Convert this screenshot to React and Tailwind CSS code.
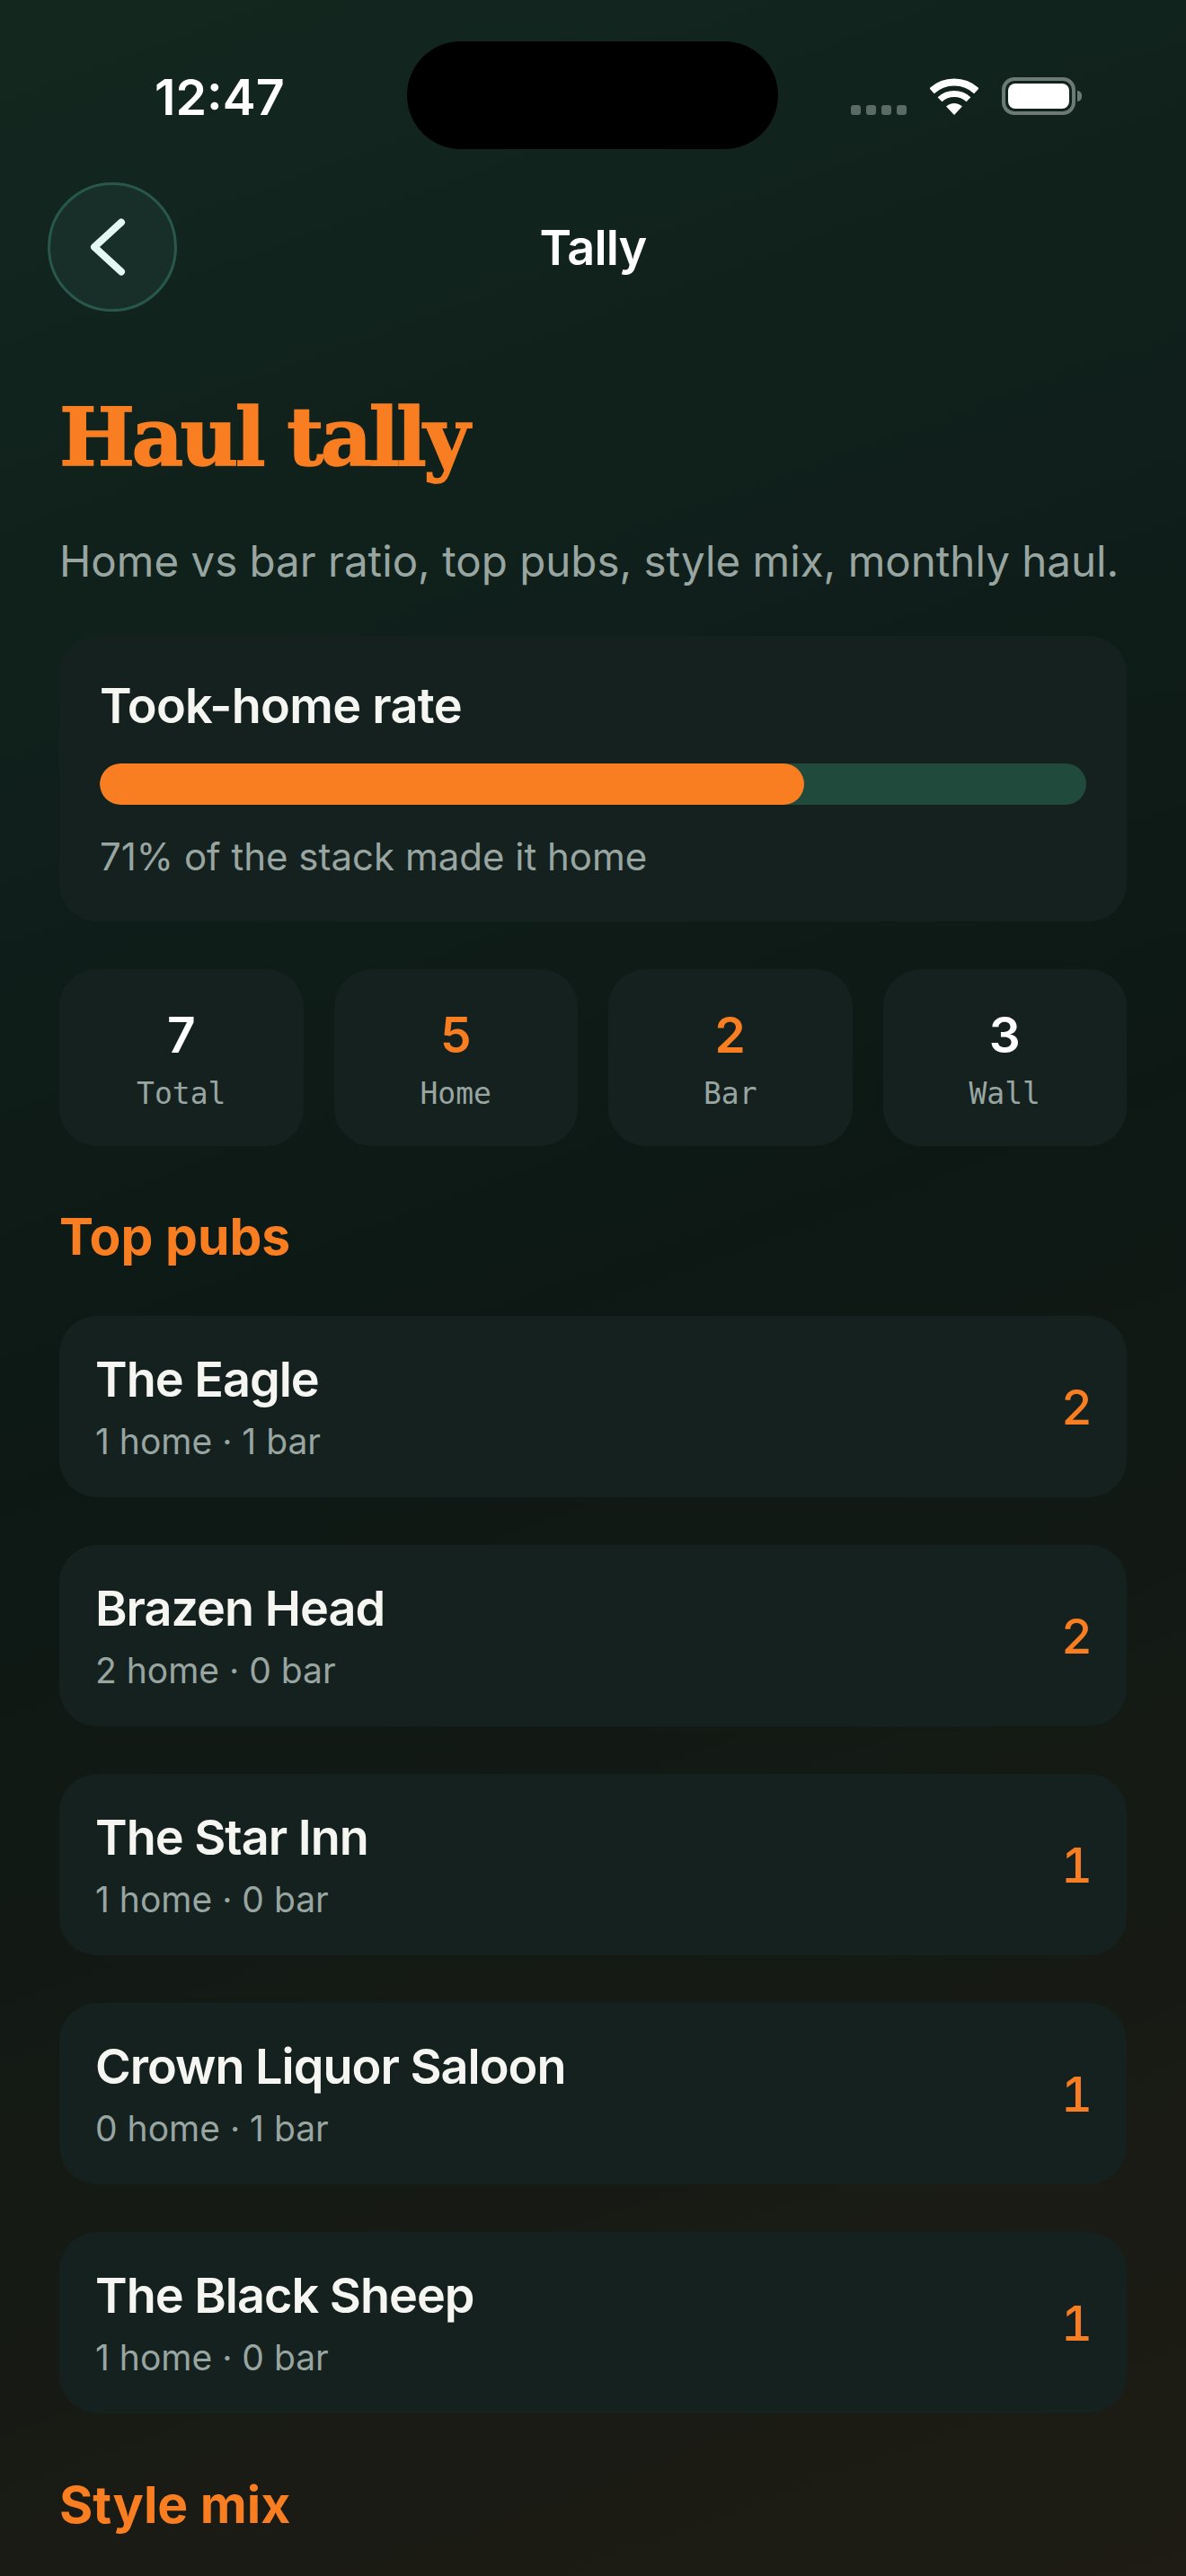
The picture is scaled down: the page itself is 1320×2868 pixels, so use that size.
const pubs = [
  { name: "The Eagle", sub: "1 home · 1 bar", count: 2 },
  { name: "Brazen Head", sub: "2 home · 0 bar", count: 2 },
  { name: "The Star Inn", sub: "1 home · 0 bar", count: 1 },
  { name: "Crown Liquor Saloon", sub: "0 home · 1 bar", count: 1 },
  { name: "The Black Sheep", sub: "1 home · 0 bar", count: 1 },
]

const stats = [
  { value: 7, label: "Total" },
  { value: 5, label: "Home", accent: true },
  { value: 2, label: "Bar", accent: true },
  { value: 3, label: "Wall" },
]

function Wifi() {
  return (
    <svg width="54" height="41" viewBox="0 0 54 41" fill="none">
      <path d="M2.1 14.3A36.5 36.5 0 0 1 51.9 14.3" stroke="#fff" strokeWidth="8" />
      <path d="M11 23.8A23.5 23.5 0 0 1 43 23.8" stroke="#fff" strokeWidth="7" />
      <path d="M27 41L18.1 31.5A13 13 0 0 1 35.9 31.5Z" fill="#fff" />
    </svg>
  )
}

function Battery() {
  return (
    <div className="flex items-center gap-[2px]">
      <div className="w-[82px] h-[42px] rounded-[14px] border-[4px] border-[#6b7a75] p-[3px]">
        <div className="w-full h-full rounded-[8px] bg-white" />
      </div>
      <div className="w-[5px] h-[12px] rounded-r-full bg-[#6b7a75]" />
    </div>
  )
}

export default function App() {
  return (
    <div
      className="w-[1320px] h-[2868px] overflow-hidden text-white bg-[linear-gradient(160deg,#13271f_0%,#0f1e1a_30%,#0d1814_50%,#1e1c14_100%)]"
      style={{ fontFamily: "Inter, sans-serif" }}
    >
      {/* status bar */}
      <div className="h-[120px] mt-[46px] flex items-center">
        <div className="w-[453px] pl-[172px] pt-[4px] text-[55.5px] leading-none font-semibold">12:47</div>
        <div className="w-[413px] h-[120px] rounded-full bg-black" />
        <div className="flex items-center ml-[81px] pt-[2px]">
          <div className="flex gap-[6px] self-end">
            {[0, 1, 2, 3].map(i => (
              <span key={i} className="w-[11px] h-[11px] rounded-[3px] bg-[#5a6a65]" />
            ))}
          </div>
          <div className="ml-[26px]"><Wifi /></div>
          <div className="ml-[26px]"><Battery /></div>
        </div>
      </div>

      {/* nav */}
      <div className="mt-[37px] pl-[53px] flex items-center h-[144px]">
        <button className="w-[144px] h-[144px] rounded-full bg-[#182f29] border-[3px] border-[#28584b] flex items-center justify-center">
          <svg width="60" height="84" viewBox="0 0 60 84" fill="none" stroke="#e4f7f0" strokeWidth="8" strokeLinecap="round" strokeLinejoin="round">
            <path d="M40 14.5L10 42L40 69.5" />
          </svg>
        </button>
        <h2 className="flex-1 text-center pr-[197px] text-[54px] tracking-[-0.8px] font-semibold">Tally</h2>
      </div>

      <div className="px-[66px]">
        <h1
          className="mt-[85px] text-[89px] leading-[110px] tracking-[-3.6px] font-bold text-[#f87e21] [-webkit-text-stroke:1.5px_#f87e21]"
          style={{ fontFamily: "'DejaVu Serif', serif" }}
        >
          Haul tally
        </h1>
        <p className="mt-[50px] text-[47.5px] leading-[66px] whitespace-nowrap text-[#98a5a0]">
          Home vs bar ratio, top pubs, style mix, monthly haul.
        </p>

        {/* rate card */}
        <div className="mt-[50px] h-[318px] rounded-[42px] bg-[#15211f] px-[45px] pt-[48px]">
          <div className="text-[54px] leading-[60px] tracking-[-0.7px] font-semibold text-[#f5f6f2]">Took-home rate</div>
          <div className="mt-[34px] h-[46px] rounded-full bg-[#1f4a3c] overflow-hidden">
            <div className="h-full rounded-full bg-[#f87e21]" style={{ width: "71.4%" }} />
          </div>
          <div className="mt-[30px] text-[42px] leading-[56px] text-[#98a5a0]">71% of the stack made it home</div>
        </div>

        {/* stat tiles */}
        <div className="mt-[53px] grid grid-cols-4 gap-[34px]">
          {stats.map(s => (
            <div key={s.label} className="h-[197px] rounded-[42px] bg-[#15211f] flex flex-col items-center pt-[40px]">
              <div className={`text-[55px] leading-[66px] font-semibold ${s.accent ? "text-[#f87e21]" : "text-white"}`}>{s.value}</div>
              <div className="mt-[12px] text-[33px] leading-[42px] text-[#98a5a0]" style={{ fontFamily: "'DejaVu Sans Mono', monospace" }}>{s.label}</div>
            </div>
          ))}
        </div>

        <h3 className="mt-[68px] text-[57px] leading-[66px] font-bold text-[#f87e21]">Top pubs</h3>

        {/* pubs */}
        <div className="mt-[55px] flex flex-col gap-[53px]">
          {pubs.map(p => (
            <div key={p.name} className="h-[202px] rounded-[42px] bg-[#15211f] pl-[40px] pr-[38px] flex items-center justify-between">
              <div>
                <div className="text-[54px] leading-[66px] tracking-[-1px] font-semibold text-[#f5f6f2]">{p.name}</div>
                <div className="mt-[12px] text-[39px] leading-[48px] text-[#98a5a0]">{p.sub}</div>
              </div>
              <div className="text-[54px] font-medium tabular-nums text-[#f87e21]">{p.count}</div>
            </div>
          ))}
        </div>

        <h3 className="mt-[69px] text-[57px] leading-[66px] font-bold text-[#f87e21]">Style mix</h3>
      </div>
    </div>
  )
}
